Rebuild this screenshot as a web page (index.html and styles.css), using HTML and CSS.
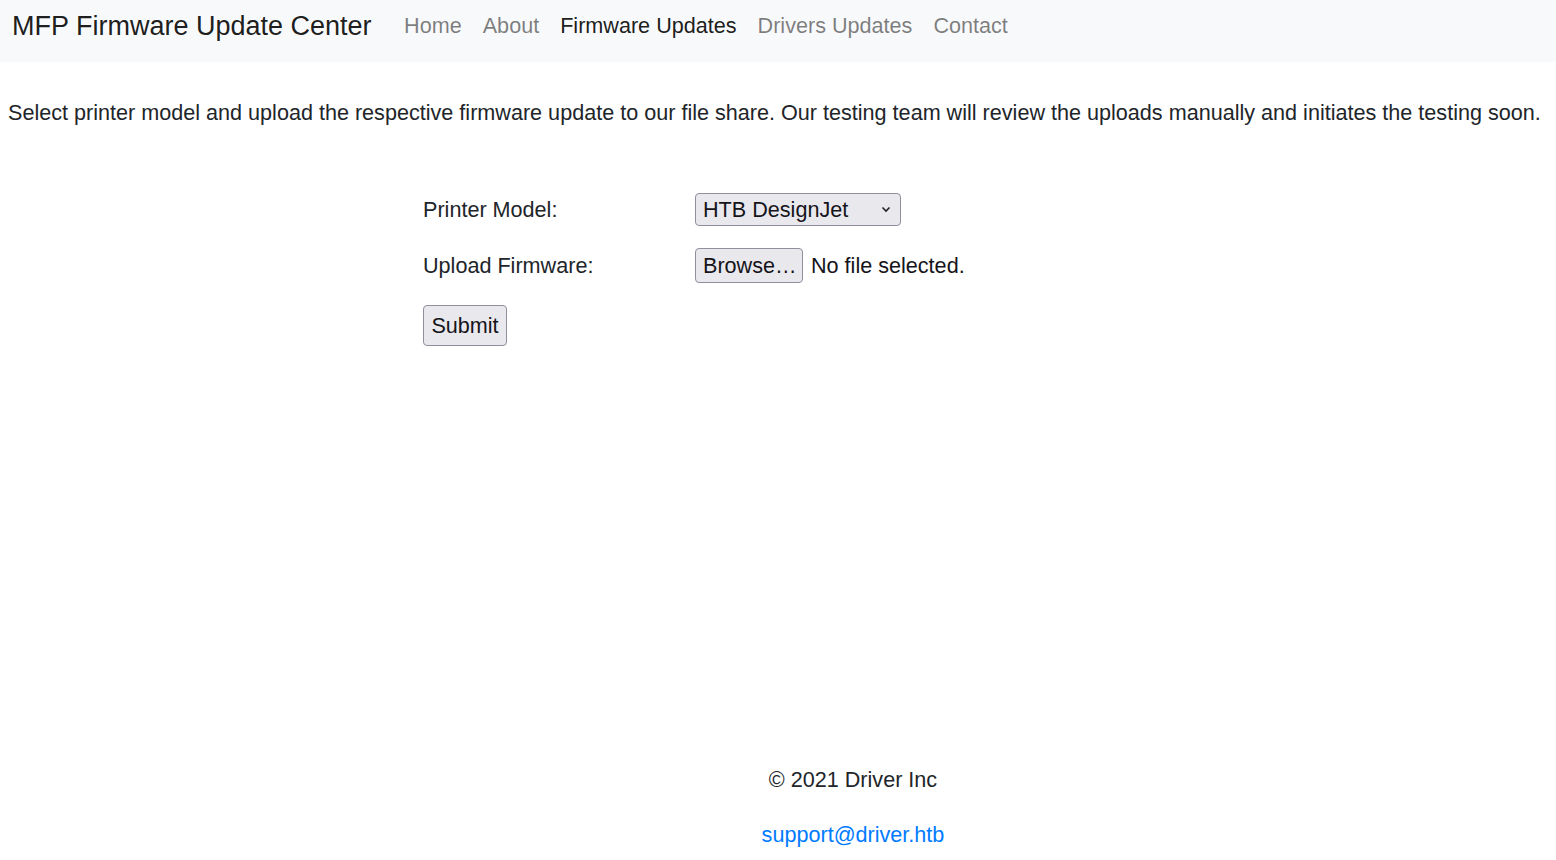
FILE: index.html
```html
<!DOCTYPE html>
<html>
<head>
<meta charset="utf-8">
<title>MFP Firmware Update Center</title>
<link rel="stylesheet" href="styles.css">
</head>
<body>
<nav class="navbar">
  <a class="brand" href="#">MFP Firmware Update Center</a>
  <ul class="nav">
    <li><a class="nav-link" href="#">Home</a></li>
    <li><a class="nav-link" href="#">About</a></li>
    <li><a class="nav-link active" href="#">Firmware Updates</a></li>
    <li><a class="nav-link" href="#">Drivers Updates</a></li>
    <li><a class="nav-link" href="#">Contact</a></li>
  </ul>
</nav>
<main class="content">
  <p class="intro">Select printer model and upload the respective firmware update to our file share. Our testing team will review the uploads manually and initiates the testing soon.</p>
  <form class="upload-form">
    <div class="row">
      <label class="label">Printer Model:</label>
      <div class="select">
        <span>HTB DesignJet</span>
        <svg class="chev" width="10" height="7" viewBox="0 0 10 7"><path d="M1.5 1.5 L5 5 L8.5 1.5" fill="none" stroke="#222" stroke-width="1.6"/></svg>
      </div>
    </div>
    <div class="row">
      <label class="label">Upload Firmware:</label>
      <div class="file">
        <button type="button" class="btn browse">Browse…</button>
        <span class="file-text">No file selected.</span>
      </div>
    </div>
    <div class="row">
      <button type="button" class="btn submit">Submit</button>
    </div>
  </form>
</main>
<footer class="footer">
  <p class="copy">© 2021 Driver Inc</p>
  <a class="mail" href="#">support@driver.htb</a>
</footer>
</body>
</html>
```

FILE: styles.css
```css
html, body {
  margin: 0;
  padding: 0;
}
body {
  font-family: "Liberation Sans", Arial, sans-serif;
  font-size: 21.6px;
  line-height: 32px;
  color: #212529;
  background: #fff;
  width: 1556px;
  height: 860px;
  overflow: hidden;
  display: flex;
  flex-direction: column;
}
.navbar {
  height: 62px;
  background: #f8f9fa;
  display: flex;
  align-items: center;
  padding: 0 12px 10px;
  box-sizing: border-box;
  flex-shrink: 0;
}
.brand {
  font-size: 27px;
  line-height: 40px;
  color: rgba(0,0,0,.9);
  text-decoration: none;
  margin-right: 22px;
}
.nav {
  list-style: none;
  margin: 0;
  padding: 0;
  display: flex;
}
.nav-link {
  display: block;
  padding: 0 10.5px;
  color: rgba(0,0,0,.5);
  text-decoration: none;
}
.nav-link.active {
  color: rgba(0,0,0,.9);
}
.content {
  flex: 1;
}
.intro {
  margin: 35px 0 0 8px;
  white-space: nowrap;
}
.upload-form {
  margin: 64px 0 0 423px;
  display: flex;
  flex-direction: column;
  gap: 22px;
}
.row {
  display: flex;
  align-items: center;
}
.label {
  width: 272px;
}
.select {
  width: 206px;
  height: 33px;
  box-sizing: border-box;
  border: 1px solid #8f8f9d;
  border-radius: 4px;
  background: #e9e9ed;
  display: flex;
  align-items: center;
  justify-content: space-between;
  padding: 0 9px 0 7px;
  color: #15141a;
}
.chev {
  display: block;
}
.file {
  display: flex;
  align-items: center;
}
.btn {
  font-family: "Liberation Sans", Arial, sans-serif;
  font-size: 21.6px;
  color: #15141a;
  background: #e9e9ed;
  border: 1px solid #8f8f9d;
  border-radius: 4px;
  padding: 0 7px;
  box-sizing: border-box;
}
.browse {
  height: 35px;
  width: 108px;
}
.file-text {
  margin-left: 8px;
  color: #15141a;
}
.submit {
  height: 41px;
  width: 84px;
}
.footer {
  padding-left: 150px;
  text-align: center;
  height: 96px;
  flex-shrink: 0;
}
.copy {
  margin: 0;
}
.mail {
  display: inline-block;
  margin-top: 23px;
  color: #007bff;
  text-decoration: none;
}
```
